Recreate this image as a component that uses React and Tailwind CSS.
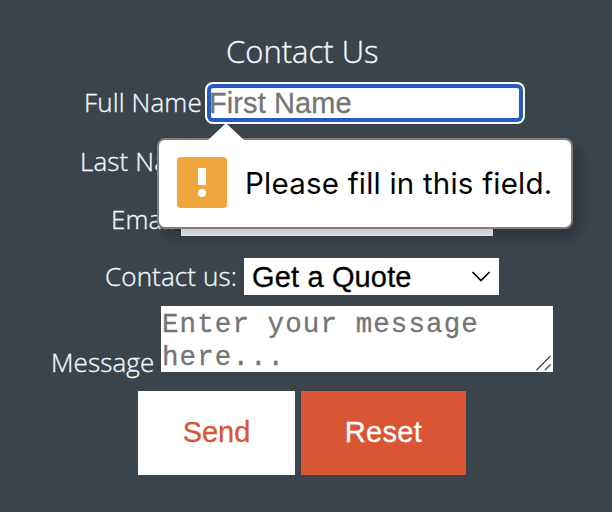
const label = "whitespace-nowrap font-['Open_Sans',sans-serif] font-light text-[26px] tracking-[0.13px] leading-[36px] text-[#f0f8ff] [-webkit-text-stroke:0.35px_#f0f8ff]";

export default function App() {
  return (
    <main className="relative h-[512px] w-[612px] overflow-hidden bg-[#3b434b] font-['Liberation_Sans',sans-serif]">
      <form className="flex flex-col">
        <h1 className="h-[82px] pl-[226px] pt-[30px] whitespace-nowrap font-['Open_Sans',sans-serif] text-[31px] font-light leading-[42px] text-[#f0f8ff] [-webkit-text-stroke:0.35px_#f0f8ff]">
          Contact Us
        </h1>
        <div className="flex h-[42px] pl-[84px]">
          <label className={label + " w-[121px] pt-[2px]"}>Full Name</label>
          <div className="h-[42px] w-[320px] rounded-[8px] bg-white p-[2px]">
            <div className="h-full rounded-[6px] bg-[#265bc2] p-[4px]">
              <div className="flex h-full items-center rounded-[2px] bg-white text-[29px] leading-[30px] tracking-[0.1px] text-[#757575] [-webkit-text-stroke:0.3px_#757575]">
                <span className="-ml-[2px] whitespace-nowrap">First Name</span>
              </div>
            </div>
          </div>
        </div>
        <div className="h-[75px] pl-[80px] pt-[19px]">
          <label className={label}>Last Name</label>
        </div>
        <div className="flex h-[37px] pl-[111px]">
          <label className={label + " w-[70px] pt-[2px]"}>Email</label>
          <div className="w-[312px] bg-white" />
        </div>
        <div className="mt-[22px] flex h-[37px] pl-[105px]">
          <label className={label + " w-[139px]"}>Contact us:</label>
          <div className="flex w-[255px] items-center justify-between bg-white pl-[8px] pr-[8px] text-[29px] leading-[37px] tracking-[0.15px] text-black [-webkit-text-stroke:0.3px_black]">
            <span className="whitespace-nowrap pt-[2px]">Get a Quote</span>
            <svg width="20" height="12" viewBox="0 0 20 12" fill="none" stroke="black" strokeWidth="1.7">
              <path d="M1.5 1 10 9.5 18.5 1" />
            </svg>
          </div>
        </div>
        <div className="mt-[11px] flex h-[66px] pl-[51px]">
          <label className={label + " w-[110px] pt-[38px]"}>Message</label>
          <div className="flex w-[392px] justify-between bg-white font-['Courier_New','Liberation_Mono',monospace] text-[27.5px] tracking-[1.1px] leading-[33px] text-[#757575] [-webkit-text-stroke:0.3px_#757575]">
            <p className="whitespace-nowrap pl-[1px] pt-[2px]">Enter your message<br />here...</p>
            <svg className="mr-[1px] mt-[49px] shrink-0" width="16" height="16" viewBox="0 0 16 16" stroke="#444" strokeWidth="1.3">
              <path d="M.5 15 14.5 1M9 15 14.5 9.5" />
            </svg>
          </div>
        </div>
        <div className="mt-[19px] flex h-[84px] gap-[6px] pl-[138px] text-[29px]">
          <button className="w-[157px] bg-white text-[#d95533] [-webkit-text-stroke:0.3px_#d95533]">Send</button>
          <button className="w-[165px] bg-[#d95533] tracking-[0.3px] text-white [-webkit-text-stroke:0.3px_white]">Reset</button>
        </div>
      </form>
      <div className="absolute left-[157px] top-[138px] flex h-[91px] w-[416px] items-center rounded-[8px] border-2 border-[#808083] bg-white pl-[18px] shadow-[6px_8px_14px_rgba(10,0,5,0.23)]">
        <svg className="absolute left-[48px] top-[-17px]" width="38" height="18" viewBox="0 0 38 18">
          <path d="M1 17 17 2Q19 0 21 2L37 17V18H1Z" fill="white" />
        </svg>
        <svg width="50" height="51" viewBox="0 0 50 51" className="mb-[2px] shrink-0">
          <rect width="50" height="51" rx="4" fill="#f0a63c" />
          <path d="M21 11h8v17h-8z" fill="white" />
          <circle cx="25" cy="36" r="4" fill="white" />
        </svg>
        <span className="mb-[2px] ml-[18px] whitespace-nowrap font-['Inter',sans-serif] text-[29.5px] leading-[40px] tracking-[0.22px] text-black">Please fill in this field.</span>
      </div>
    </main>
  );
}
